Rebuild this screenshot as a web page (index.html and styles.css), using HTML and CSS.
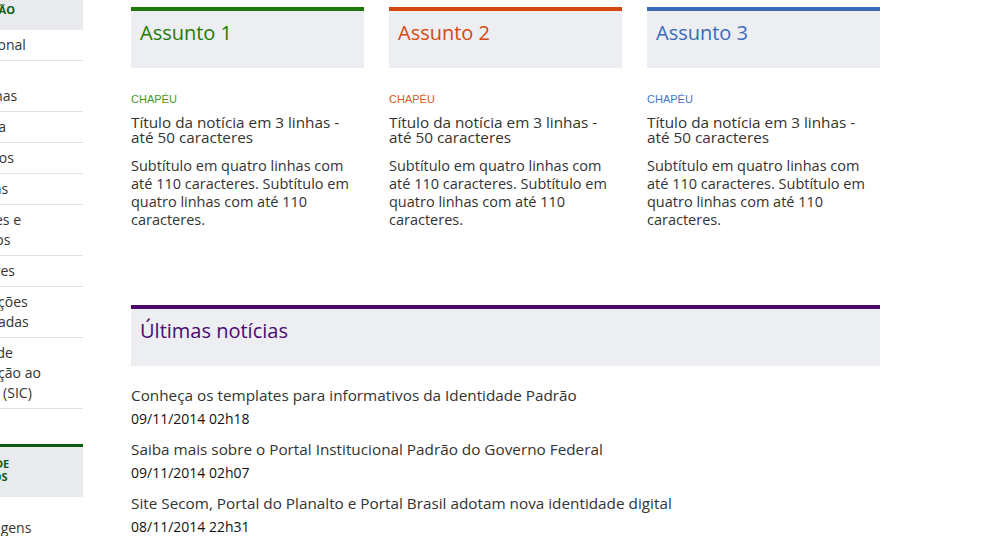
FILE: index.html
```html
<!DOCTYPE html>
<html lang="pt-BR">
<head>
<meta charset="utf-8">
<title>Portal Padrão</title>
<link rel="stylesheet" href="styles.css">
</head>
<body>
<div class="page">
  <aside class="sidebar">
    <nav class="menu">
      <h2 class="menu-head">ACESSO À INFORMAÇÃO</h2>
      <ul class="menu-list">
        <li><a href="#">Institucional</a></li>
        <li><a href="#">Ações e Programas</a></li>
        <li><a href="#">Auditoria</a></li>
        <li><a href="#">Convênios</a></li>
        <li><a href="#">Despesas</a></li>
        <li><a href="#">Licitações e Contratos</a></li>
        <li><a href="#">Servidores</a></li>
        <li><a href="#">Informações Classificadas</a></li>
        <li><a href="#">Serviço de Informação ao Cidadão (SIC)</a></li>
      </ul>
    </nav>
    <nav class="menu menu-second">
      <h2 class="menu-head">CENTRAIS DE CONTEÚDOS</h2>
      <ul class="menu-list menu-list-plain">
        <li><a href="#">Imagens</a></li>
        <li><a href="#">Vídeos</a></li>
      </ul>
    </nav>
  </aside>

  <main class="content">
    <div class="cards">
      <article class="card card-green">
        <h2 class="card-head">Assunto 1</h2>
        <p class="chapeu">CHAPÉU</p>
        <h3 class="card-title">Título da notícia em 3 linhas - até 50 caracteres</h3>
        <p class="card-sub">Subtítulo em quatro linhas com até 110 caracteres. Subtítulo em quatro linhas com até 110 caracteres.</p>
      </article>
      <article class="card card-orange">
        <h2 class="card-head">Assunto 2</h2>
        <p class="chapeu">CHAPÉU</p>
        <h3 class="card-title">Título da notícia em 3 linhas - até 50 caracteres</h3>
        <p class="card-sub">Subtítulo em quatro linhas com até 110 caracteres. Subtítulo em quatro linhas com até 110 caracteres.</p>
      </article>
      <article class="card card-blue">
        <h2 class="card-head">Assunto 3</h2>
        <p class="chapeu">CHAPÉU</p>
        <h3 class="card-title">Título da notícia em 3 linhas - até 50 caracteres</h3>
        <p class="card-sub">Subtítulo em quatro linhas com até 110 caracteres. Subtítulo em quatro linhas com até 110 caracteres.</p>
      </article>
    </div>

    <section class="latest">
      <h2 class="latest-head">Últimas notícias</h2>
      <ul class="news">
        <li class="news-item">
          <a class="news-title" href="#">Conheça os templates para informativos da Identidade Padrão</a>
          <span class="news-date">09/11/2014 02h18</span>
        </li>
        <li class="news-item">
          <a class="news-title" href="#">Saiba mais sobre o Portal Institucional Padrão do Governo Federal</a>
          <span class="news-date">09/11/2014 02h07</span>
        </li>
        <li class="news-item">
          <a class="news-title" href="#">Site Secom, Portal do Planalto e Portal Brasil adotam nova identidade digital</a>
          <span class="news-date">08/11/2014 22h31</span>
        </li>
      </ul>
    </section>
  </main>
</div>
</body>
</html>
```

FILE: styles.css
```css
html, body {
  margin: 0;
  padding: 0;
  background: #fff;
  overflow: hidden;
}

body {
  font-family: "Open Sans", "Noto Sans", sans-serif;
  color: #333;
}

a {
  color: inherit;
  text-decoration: none;
}

ul {
  list-style: none;
  margin: 0;
  padding: 0;
}

p, h2, h3 {
  margin: 0;
}

.page {
  display: flex;
  align-items: flex-start;
  margin-top: -23px;
}

/* ---------- sidebar ---------- */
.sidebar {
  flex: 0 0 148px;
  width: 148px;
  margin-left: -65px;
}

.menu-head {
  border-top: 3px solid #0b5c12;
  background: #e9eaed;
  color: #0b5c12;
  font-size: 11px;
  font-weight: 700;
  line-height: 13px;
  height: 53px;
  box-sizing: border-box;
  padding: 10px 15px 0 4px;
}

.menu-list li {
  border-bottom: 1px solid #e2e2e2;
}

.menu-list a {
  display: block;
  padding: 5px 19px 5px 11px;
  font-size: 14px;
  line-height: 20px;
  color: #333;
}

.menu-second {
  margin-top: 35px;
}

.menu-list-plain {
  padding-top: 16px;
}

.menu-list-plain li {
  border-bottom: none;
}

.menu-list-plain a {
  padding-left: 41px;
}

/* ---------- content ---------- */
.content {
  margin-left: 48px;
  padding-top: 30px;
  width: 749px;
}

.cards {
  display: grid;
  grid-template-columns: repeat(3, 233px);
  column-gap: 25px;
}

.card-head {
  border-top: 4px solid currentColor;
  background: #edeef2;
  padding: 8px 9px 0;
  height: 49px;
  font-size: 20px;
  font-weight: 400;
  line-height: 28px;
}

.card-green { color: #1f7a05; }
.card-orange { color: #d4490e; }
.card-blue { color: #3a6ab8; }

.chapeu {
  margin-top: 24px;
  font-family: "Liberation Sans", Arial, sans-serif;
  font-size: 11px;
  line-height: 14px;
}

.card-green .chapeu { color: #3f9a2c; }
.card-orange .chapeu { color: #e05a28; }
.card-blue .chapeu { color: #4577c6; }

.card-title {
  margin-top: 8px;
  padding-top: 1px;
  color: #333;
  font-size: 15.3px;
  font-weight: 400;
  line-height: 15px;
}

.card-sub {
  margin-top: 12px;
  color: #333;
  font-size: 14.5px;
  line-height: 18px;
}

.latest {
  margin-top: 76px;
}

.latest-head {
  border-top: 4px solid #4a0a70;
  background: #edeef2;
  color: #4a0a70;
  padding: 8px 9px 0;
  height: 49px;
  font-size: 20px;
  font-weight: 400;
  line-height: 28px;
}

.news {
  padding-top: 18px;
}

.news-item {
  display: flex;
  flex-direction: column;
  margin-bottom: 9px;
}

.news-title {
  font-size: 15.3px;
  line-height: 22px;
  color: #333;
}

.news-date {
  margin-top: 3px;
  font-size: 14px;
  line-height: 20px;
  color: #111;
}
```
